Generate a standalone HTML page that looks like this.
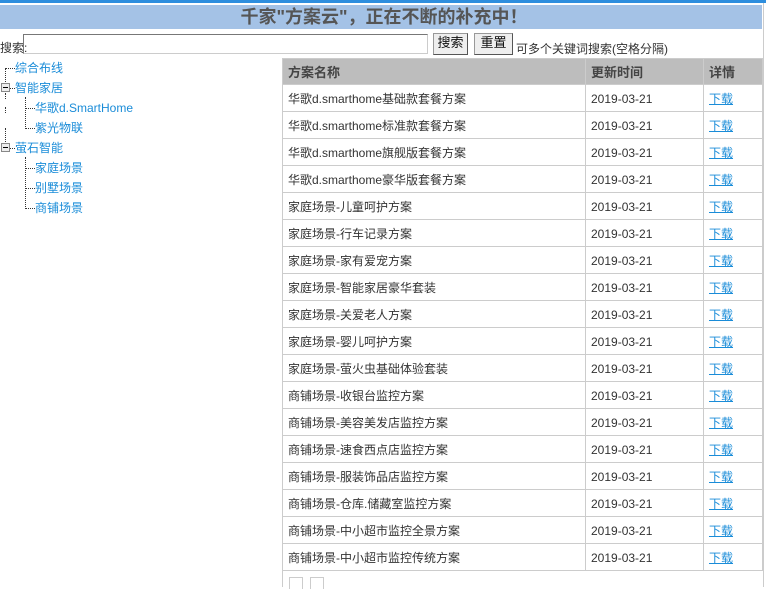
<!DOCTYPE html>
<html><head><meta charset="utf-8"><style>
*{margin:0;padding:0;box-sizing:border-box}
body{width:766px;height:587px;overflow:hidden;background:#fff;font-family:"Liberation Sans","Noto Sans CJK SC",sans-serif;font-size:12px;color:#333;position:relative}
.top{position:absolute;left:0;top:0;width:766px;height:3px;background:#2e8ede}
.band{position:absolute;left:0;top:5px;width:762px;height:24px;background:#a4c2e6;text-align:center;font-size:18px;font-weight:bold;color:#555;line-height:24px;padding-left:6px}
.vr{position:absolute;left:763px;top:3px;width:1px;height:584px;background:#ccc}
.s{position:absolute;top:34px;font-size:12px}
.inp{position:absolute;left:23px;top:34px;width:405px;height:20px;border:1px solid #ccc;border-top-color:#777;border-left-color:#777}
.btn{position:absolute;top:33px;height:22px;background:#eee;border:1px solid #999;border-right-color:#555;border-bottom-color:#555;font-size:13px;text-align:center;line-height:18px;color:#111}
table{position:absolute;left:282px;top:58px;width:481px;border-collapse:collapse}
td,th{border:1px solid #ccc;height:27px;padding-left:5px;text-align:left;font-size:12px;font-weight:normal;padding-top:1px}
th{background:#bdbdbd;height:26px;font-weight:bold;color:#444;font-size:13px;padding-top:0}
td a{color:#1a8cd8;text-decoration:underline}
.tree div{position:absolute;color:#1a8cd8;font-size:12px;line-height:14px}
.dh{position:absolute;border-top:1px dotted #333;height:0}
.dv{position:absolute;border-left:1px dotted #333;width:0}
.pm{position:absolute;width:9px;height:9px;border:1px solid #888;background:#eee}
.pm:after{content:"";position:absolute;left:1px;top:3px;width:5px;height:1px;background:#000}
.pg{position:absolute;top:577px;width:14px;height:12px;border:1px solid #ccc;border-bottom:none}
</style></head><body>
<div class="top"></div>
<div class="band">千家"方案云"，正在不断的补充中！</div>
<div class="vr"></div>
<div class="s" style="left:0;top:39px">搜索:</div>
<div class="inp"></div>
<div class="btn" style="left:433px;width:35px">搜索</div>
<div class="btn" style="left:474px;width:39px">重置</div>
<div class="s" style="left:516px;top:40px;font-size:12px">可多个关键词搜索(空格分隔)</div>
<div class="tree">
<div style="left:15px;top:61px">综合布线</div>
<div style="left:15px;top:81px">智能家居</div>
<div style="left:35px;top:101px">华歌d.SmartHome</div>
<div style="left:35px;top:121px">紫光物联</div>
<div style="left:15px;top:141px">萤石智能</div>
<div style="left:35px;top:161px">家庭场景</div>
<div style="left:35px;top:181px">别墅场景</div>
<div style="left:35px;top:201px">商铺场景</div>
</div>
<div class="dh" style="left:6px;top:68px;width:9px"></div>
<div class="dv" style="left:5px;top:68px;height:14px"></div>
<div class="pm" style="left:1px;top:83px"></div>
<div class="dh" style="left:10px;top:88px;width:5px"></div>
<div class="dv" style="left:5px;top:93px;height:6px"></div>
<div class="dv" style="left:5px;top:107px;height:6px"></div>
<div class="dv" style="left:5px;top:128px;height:14px"></div>
<div class="pm" style="left:1px;top:143px"></div>
<div class="dh" style="left:10px;top:148px;width:5px"></div>
<div class="dv" style="left:25px;top:97px;height:32px"></div>
<div class="dh" style="left:26px;top:108px;width:9px"></div>
<div class="dh" style="left:26px;top:128px;width:9px"></div>
<div class="dv" style="left:25px;top:157px;height:52px"></div>
<div class="dh" style="left:26px;top:168px;width:9px"></div>
<div class="dh" style="left:26px;top:188px;width:9px"></div>
<div class="dh" style="left:26px;top:208px;width:9px"></div>
<table>
<tr><th style="width:303px">方案名称</th><th style="width:118px">更新时间</th><th>详情</th></tr>
<tr><td>华歌d.smarthome基础款套餐方案</td><td>2019-03-21</td><td><a>下载</a></td></tr>
<tr><td>华歌d.smarthome标准款套餐方案</td><td>2019-03-21</td><td><a>下载</a></td></tr>
<tr><td>华歌d.smarthome旗舰版套餐方案</td><td>2019-03-21</td><td><a>下载</a></td></tr>
<tr><td>华歌d.smarthome豪华版套餐方案</td><td>2019-03-21</td><td><a>下载</a></td></tr>
<tr><td>家庭场景-儿童呵护方案</td><td>2019-03-21</td><td><a>下载</a></td></tr>
<tr><td>家庭场景-行车记录方案</td><td>2019-03-21</td><td><a>下载</a></td></tr>
<tr><td>家庭场景-家有爱宠方案</td><td>2019-03-21</td><td><a>下载</a></td></tr>
<tr><td>家庭场景-智能家居豪华套装</td><td>2019-03-21</td><td><a>下载</a></td></tr>
<tr><td>家庭场景-关爱老人方案</td><td>2019-03-21</td><td><a>下载</a></td></tr>
<tr><td>家庭场景-婴儿呵护方案</td><td>2019-03-21</td><td><a>下载</a></td></tr>
<tr><td>家庭场景-萤火虫基础体验套装</td><td>2019-03-21</td><td><a>下载</a></td></tr>
<tr><td>商铺场景-收银台监控方案</td><td>2019-03-21</td><td><a>下载</a></td></tr>
<tr><td>商铺场景-美容美发店监控方案</td><td>2019-03-21</td><td><a>下载</a></td></tr>
<tr><td>商铺场景-速食西点店监控方案</td><td>2019-03-21</td><td><a>下载</a></td></tr>
<tr><td>商铺场景-服装饰品店监控方案</td><td>2019-03-21</td><td><a>下载</a></td></tr>
<tr><td>商铺场景-仓库.储藏室监控方案</td><td>2019-03-21</td><td><a>下载</a></td></tr>
<tr><td>商铺场景-中小超市监控全景方案</td><td>2019-03-21</td><td><a>下载</a></td></tr>
<tr><td>商铺场景-中小超市监控传统方案</td><td>2019-03-21</td><td><a>下载</a></td></tr>
</table>
<div class="dv" style="left:282px;top:570px;height:17px;border-left:1px solid #ccc"></div>
<div class="pg" style="left:289px"></div>
<div class="pg" style="left:310px"></div>
</body></html>
